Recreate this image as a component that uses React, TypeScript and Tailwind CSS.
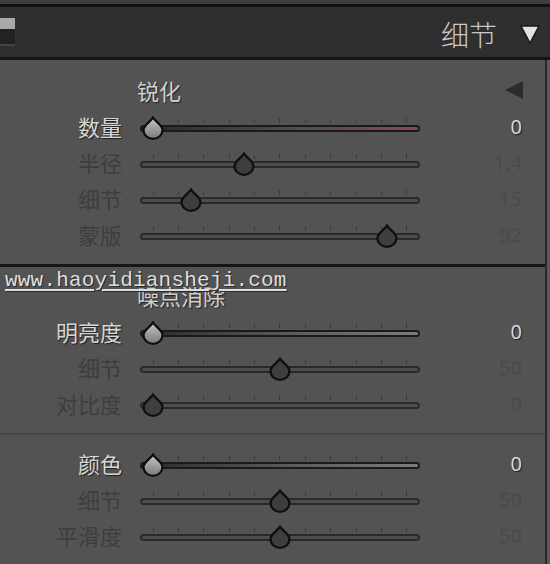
import React, { useId } from 'react';

type Row = {
  label: string;
  value: string;
  // knob position along the track, 0..1
  pos: number;
  active?: boolean;
  tint?: 'red' | 'gray';
};

const sharpen: Row[] = [
  { label: '数量', value: '0', pos: 0, active: true, tint: 'red' },
  { label: '半径', value: '1.4', pos: 0.36 },
  { label: '细节', value: '15', pos: 0.15 },
  { label: '蒙版', value: '92', pos: 0.92 },
];

const luminance: Row[] = [
  { label: '明亮度', value: '0', pos: 0, active: true, tint: 'gray' },
  { label: '细节', value: '50', pos: 0.5 },
  { label: '对比度', value: '0', pos: 0 },
];

const color: Row[] = [
  { label: '颜色', value: '0', pos: 0, active: true, tint: 'gray' },
  { label: '细节', value: '50', pos: 0.5 },
  { label: '平滑度', value: '50', pos: 0.5 },
];

const TICKS = Array.from({ length: 11 });

function Knob({ pos, active }: { pos: number; active?: boolean }) {
  const id = useId();
  return (
    <svg
      className="absolute top-[6px]"
      style={{ left: 2 + pos * 254 }}
      width="22"
      height="24"
      viewBox="0 0 22 24"
    >
      <defs>
        <linearGradient id={id} x1="0" y1="0" x2="0" y2="1">
          <stop offset="0" stopColor="#c6c6c6" />
          <stop offset="1" stopColor="#7a7a7a" />
        </linearGradient>
      </defs>
      <path
        d="M11 1.5 C 13 5.5, 20.5 9, 20.5 14 A 9.5 8.8 0 0 1 1.5 14 C 1.5 9, 9 5.5, 11 1.5 Z"
        fill={active ? `url(#${id})` : '#3e3e3e'}
        stroke="#0e0e0e"
        strokeWidth="2.2"
      />
    </svg>
  );
}

function Slider({ row }: { row: Row }) {
  const track =
    row.tint === 'red'
      ? 'border-[#1a1a1a] bg-[linear-gradient(to_right,#2a2a2a,#4e4e4e_55%,#8a4852)]'
      : row.tint === 'gray'
        ? 'border-[#1a1a1a] bg-[linear-gradient(to_right,#2a2a2a,#585858_50%,#7c7c7c)]'
        : 'border-[#2a2a2a] bg-[#4d4d4d]';

  return (
    <div className="relative ml-[18px] flex h-[36px] w-[280px] flex-col pt-[8px]">
      {/* tick marks */}
      <div className="flex h-[5px] items-end justify-between px-[12.5px]">
        {TICKS.map((_, i) => (
          <div key={i} className={`w-px bg-[#3a3a3a] ${i === 5 || i === 10 ? 'h-[5px]' : 'h-[4px]'}`} />
        ))}
      </div>
      <div className={`mt-[2px] h-[7px] rounded-full border-2 ${track}`} />
      <Knob pos={row.pos} active={row.active} />
    </div>
  );
}

function SliderRow({ row }: { row: Row }) {
  return (
    <div className="flex h-[36px] items-center">
      <div
        className={`w-[122px] pb-[4px] text-right text-[22px] leading-none ${
          row.active ? 'text-[#d6d6d6] [text-shadow:1px_1px_1px_#1e1e1e]' : 'text-[#3e3e3e]'
        }`}
      >
        {row.label}
      </div>
      <Slider row={row} />
      <div
        className={`w-[102px] pb-[2px] text-right font-['Noto_Sans',sans-serif] text-[20px] leading-none ${
          row.active ? 'text-[#d8d8d8] [text-shadow:1px_1px_1px_#1e1e1e]' : 'text-[#4a4a4a]'
        }`}
      >
        {row.value}
      </div>
    </div>
  );
}

function SectionTitle({ title, arrow }: { title: string; arrow?: boolean }) {
  return (
    <div className="flex h-[36px] items-center pl-[137px]">
      <span className="pb-[5px] text-[22px] leading-none text-[#d0d0d0] [text-shadow:1px_1px_1px_#222]">{title}</span>
      {arrow && (
        <svg className="ml-auto mr-[22px] mb-[4px]" width="18" height="18" viewBox="0 0 18 18">
          <polygon points="18,0 18,18 0,9" fill="#2c2c2c" />
        </svg>
      )}
    </div>
  );
}

export default function App() {
  return (
    <div className="relative h-[564px] w-[550px] overflow-hidden bg-[#5a5a5a] font-['Noto_Sans_CJK_SC',sans-serif]">
      <div className="h-[4px] bg-[#3d3d3d]" />
      <div className="h-[3px] bg-[#121212]" />

      {/* panel header */}
      <header className="flex h-[50px] items-center bg-[#2f2f2f]">
        <div className="flex h-[28px] w-[15px] flex-col border-b-2 border-[#444]">
          <div className="h-[11px] bg-[#a9a9a9]" />
          <div className="flex-1 bg-[#222]" />
        </div>
        <span className="ml-auto mt-[4px] text-[28px] font-light leading-none text-[#c8c8c8]">细节</span>
        <svg className="ml-[23px] mr-[10px] mt-[4px]" width="20" height="19" viewBox="0 0 20 19">
          <polygon points="1,1 19,1 10,18" fill="#e2e2e2" stroke="#1a1a1a" strokeWidth="1.5" />
        </svg>
      </header>
      <div className="h-[3px] bg-[#141414]" />

      <div className="w-[547px] border-r-2 border-[#2a2a2a] bg-[#535353]">
        {/* sharpening */}
        <div className="pt-[14px] pb-[10px]">
          <SectionTitle title="锐化" arrow />
          {sharpen.map((r) => (
            <SliderRow key={r.label} row={r} />
          ))}
        </div>
        <div className="h-[3px] bg-[#161616]" />

        {/* noise reduction */}
        <div className="pt-[12px] pb-[10px]">
          <SectionTitle title="噪点消除" />
          {luminance.map((r) => (
            <SliderRow key={r.label} row={r} />
          ))}
        </div>
        <div className="h-[2px] bg-[#474747]" />
        <div className="pt-[12px] pb-[10px]">
          {color.map((r) => (
            <SliderRow key={r.label} row={r} />
          ))}
        </div>
      </div>

      {/* watermark */}
      <div className="absolute left-[5px] top-[270px] font-['Liberation_Mono',monospace] text-[21px] leading-none tracking-[0.2px] text-[#dedede] underline underline-offset-[3px] [text-shadow:1px_1px_0_#2a2a2a]">
        www.haoyidiansheji.com
      </div>
    </div>
  );
}
